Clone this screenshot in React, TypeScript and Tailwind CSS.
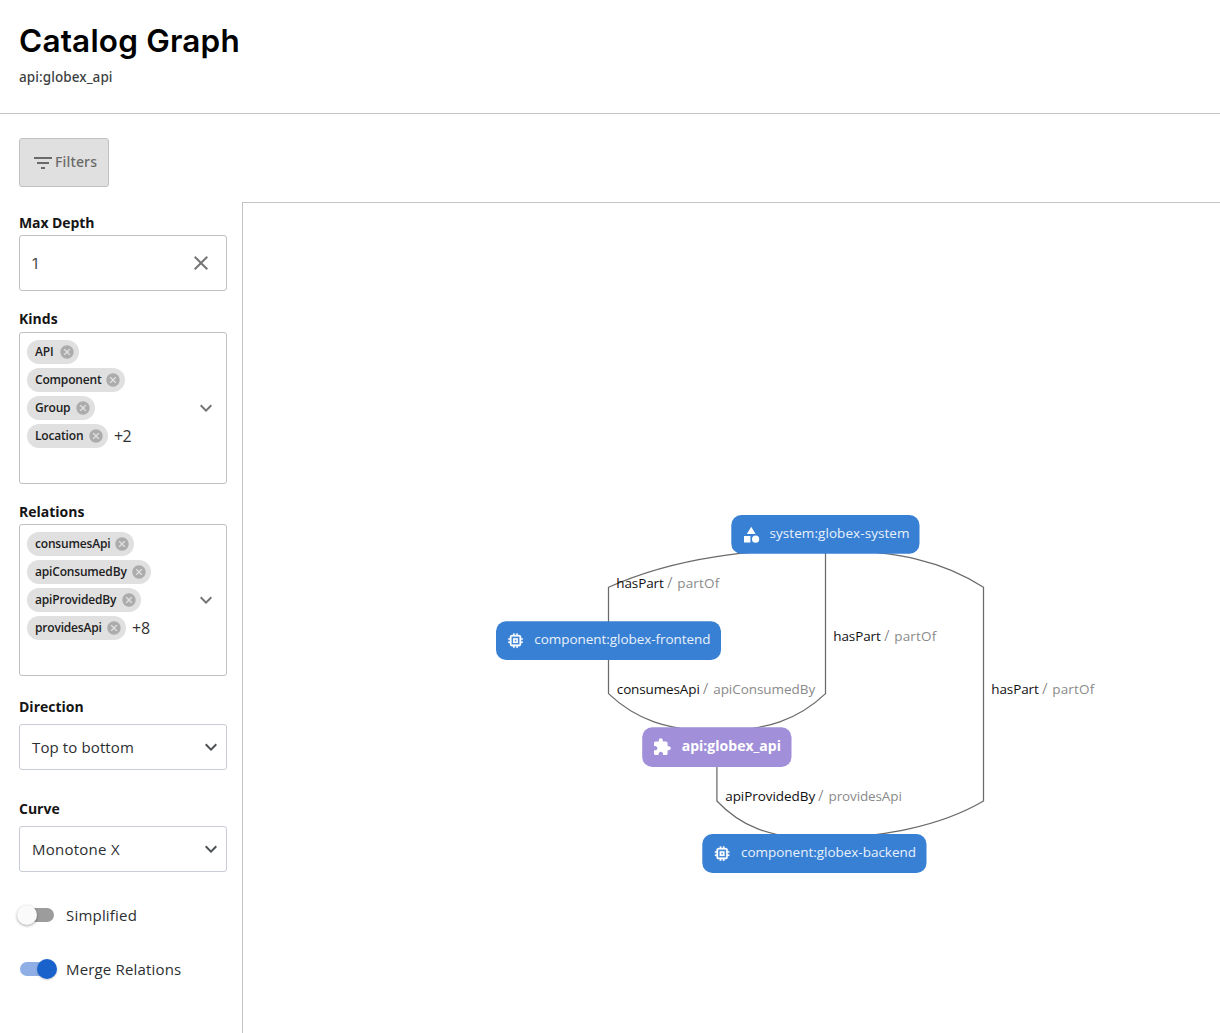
import React from "react";

const ICONS = {
  filter: "M10 18h4v-2h-4v2zM3 6v2h18V6H3zm3 7h12v-2H6v2z",
  close:
    "M19 6.41L17.59 5 12 10.59 6.41 5 5 6.41 10.59 12 5 17.59 6.41 19 12 13.41 17.59 19 19 17.59 13.41 12z",
  cancel:
    "M12 2C6.47 2 2 6.47 2 12s4.47 10 10 10 10-4.47 10-10S17.53 2 12 2zm5 13.59L15.59 17 12 13.41 8.41 17 7 15.59 10.59 12 7 8.41 8.41 7 12 10.59 15.59 7 17 8.41 13.41 12 17 15.59z",
  expand: "M16.59 8.59L12 13.17 7.41 8.59 6 10l6 6 6-6z",
  memory:
    "M15 9H9v6h6V9zm-2 4h-2v-2h2v2zm8-2V9h-2V7c0-1.1-.9-2-2-2h-2V3h-2v2h-2V3H9v2H7c-1.1 0-2 .9-2 2v2H3v2h2v2H3v2h2v2c0 1.1.9 2 2 2h2v2h2v-2h2v2h2v-2h2c1.1 0 2-.9 2-2v-2h2v-2h-2v-2h2zm-4 6H7V7h10v10z",
  category: "M12 2l-5.5 9h11zM17.5 13a4.5 4.5 0 1 0 0 9a4.5 4.5 0 1 0 0-9zM3 13.5h8v8H3z",
  extension:
    "M20.5 11H19V7c0-1.1-.9-2-2-2h-4V3.5C13 2.12 11.88 1 10.5 1S8 2.12 8 3.5V5H4c-1.1 0-1.99.9-1.99 2v3.8H3.5c1.49 0 2.7 1.21 2.7 2.7s-1.21 2.7-2.7 2.7H2V20c0 1.1.9 2 2 2h3.8v-1.5c0-1.49 1.21-2.7 2.7-2.7 1.49 0 2.7 1.21 2.7 2.7V22H17c1.1 0 2-.9 2-2v-4h1.5c1.38 0 2.5-1.12 2.5-2.5S21.88 11 20.5 11z",
};

function Icon({ name, className }: { name: keyof typeof ICONS; className: string }) {
  return (
    <svg viewBox="0 0 24 24" fill="currentColor" className={`shrink-0 ${className}`}>
      <path d={ICONS[name]} />
    </svg>
  );
}

function Label({ children, className = "" }: { children: React.ReactNode; className?: string }) {
  return <div className={`h-5 text-[14px] leading-5 font-bold text-[#151515] ${className}`}>{children}</div>;
}

interface ChipData {
  label: string;
  width: string;
}

function ChipSelect({ chips, more, moreClass }: { chips: ChipData[]; more: string; moreClass: string }) {
  return (
    <div className="flex h-[152px] items-center justify-between rounded-[3px] border border-[#c1c1c1] pr-2 pl-[7px]">
      <div className="flex h-full flex-col gap-1 pt-[7px]">
        {chips.map((c, i) => (
          <div key={c.label} className="flex items-center">
            <div
              className={`flex h-6 items-center justify-between rounded-full bg-[#e0e0e0] pr-1 pl-2 ${c.width}`}
            >
              <span className="text-[12px] leading-6 font-semibold tracking-[-0.18px] whitespace-nowrap text-[#212121]">
                {c.label}
              </span>
              <Icon name="cancel" className="size-4 text-[#acacac]" />
            </div>
            {i === chips.length - 1 && (
              <span className={`text-[16px] leading-6 text-[#333] ${moreClass}`}>{more}</span>
            )}
          </div>
        ))}
      </div>
      <Icon name="expand" className="size-6 text-[#757575]" />
    </div>
  );
}

function Select({ value, className }: { value: string; className: string }) {
  return (
    <div className="flex h-[46px] items-center justify-between rounded-[3px] border border-[#c7cbd4] pr-[3px] pl-3">
      <span className={`pb-px text-[15px] leading-[22px] text-[#2c2f32] ${className}`}>{value}</span>
      <Icon name="expand" className="size-6 text-[#4f5255]" />
    </div>
  );
}

interface NodeProps {
  x: number;
  y: number;
  w: number;
  h: number;
  fill: string;
  icon: keyof typeof ICONS;
  iconX: number;
  iconY: number;
  label: string;
  textX: number;
  textW: number;
  textY: number;
  bold?: boolean;
}

const NODES: NodeProps[] = [
  { x: 731.3, y: 515, w: 188.2, h: 38.8, fill: "#3880d4", icon: "category", iconX: 741.6, iconY: 525.2, label: "system:globex-system", textX: 769.5, textW: 140, textY: 538.3 },
  { x: 496, y: 621.2, w: 225, h: 38.8, fill: "#3880d4", icon: "memory", iconX: 505.9, iconY: 631, label: "component:globex-frontend", textX: 534.3, textW: 176.3, textY: 644.3 },
  { x: 642.2, y: 727.2, w: 149.3, h: 39.8, fill: "#a18fd9", icon: "extension", iconX: 652.4, iconY: 737.4, label: "api:globex_api", textX: 681.7, textW: 99.3, textY: 751, bold: true },
  { x: 702.3, y: 834, w: 224.2, h: 38.9, fill: "#3880d4", icon: "memory", iconX: 712.5, iconY: 844, label: "component:globex-backend", textX: 741, textW: 175, textY: 857.3 },
];

const EDGES = [
  "M825.5 547 C753 551 680 555 608.5 587.3 V693.6 C644.5 728 680.5 728 716.5 734.5",
  "M825.5 540 V693.6 C789.5 728 753 728 716.5 734.5",
  "M825.5 547 C878 553 930.8 553 983.5 587.3 V801 C930.8 832 868 836 815 842",
  "M716.9 750 V801 C749 835 782 835 815 842",
];

const EDGE_LABELS = [
  { x: 616.3, y: 588, a: "hasPart", aw: 47.5, s: 667.3, b: "partOf", bx: 677.2, bw: 42 },
  { x: 833.3, y: 641, a: "hasPart", aw: 47.5, s: 884.3, b: "partOf", bx: 894.2, bw: 42 },
  { x: 991.3, y: 694, a: "hasPart", aw: 47.5, s: 1042.3, b: "partOf", bx: 1052.2, bw: 42 },
  { x: 616.8, y: 694, a: "consumesApi", aw: 83, s: 703, b: "apiConsumedBy", bx: 713.2, bw: 102 },
  { x: 725.2, y: 801, a: "apiProvidedBy", aw: 90, s: 818.3, b: "providesApi", bx: 828.5, bw: 73.3 },
];

function GraphNode(n: NodeProps) {
  return (
    <g>
      <rect x={n.x} y={n.y} width={n.w} height={n.h} rx={10} fill={n.fill} />
      <svg x={n.iconX} y={n.iconY} width={19.2} height={19.2} viewBox="0 0 24 24" fill="#fff">
        <path d={ICONS[n.icon]} stroke="#fff" strokeWidth={n.icon === "memory" ? 0.25 : 0} />
      </svg>
      <text
        x={n.textX}
        y={n.textY}
        textLength={n.textW}
        fill={n.bold ? "#fff" : "#e9f1fb"}
        className={n.bold ? "text-[14px] font-bold" : "text-[13.5px]"}
      >
        {n.label}
      </text>
    </g>
  );
}

function Graph() {
  return (
    <svg viewBox="243 203 977 830" className="block h-[830px] w-[977px]">
      <g fill="none" stroke="#6a6a6a" strokeWidth={1.25}>
        {EDGES.map((d) => (
          <path key={d} d={d} />
        ))}
      </g>
      {EDGE_LABELS.map((l) => (
        <g key={`${l.x}-${l.y}`} className="text-[13.5px]">
          <text x={l.x} y={l.y} textLength={l.aw} fill="#111">
            {l.a}
          </text>
          <text x={l.s} y={l.y} fill="#555" className="text-[15px] font-light">
            /
          </text>
          <text x={l.bx} y={l.y} textLength={l.bw} fill="#8a8a8a">
            {l.b}
          </text>
        </g>
      ))}
      {NODES.map((n) => (
        <GraphNode key={n.label} {...n} />
      ))}
    </svg>
  );
}

export default function App() {
  return (
    <div className="flex h-[1033px] w-[1220px] flex-col overflow-hidden bg-white font-['Open_Sans',sans-serif]">
      <header className="h-[114px] shrink-0 border-b border-[#c4c4c4] pt-[21px] pl-[19px]">
        <h1 className="h-10 font-[Inter,sans-serif] text-[31.5px] leading-10 font-semibold tracking-[0.18px] whitespace-nowrap text-black">
          Catalog Graph
        </h1>
        <p className="mt-1.5 h-5 font-['Noto_Sans',sans-serif] text-[13.5px] leading-5 font-medium tracking-[0.08px] text-[#3c3f42]">
          api:globex_api
        </p>
      </header>
      <div className="h-[88px] shrink-0 pt-6 pl-[19px]">
        <button className="flex h-[49px] w-[90px] items-center rounded-[3px] border border-[#c1c1c1] bg-[#e0e0e0] pl-[11px] text-[#6a6a6a]">
          <Icon name="filter" className="size-6" />
          <span className="pb-0.5 font-['Noto_Sans',sans-serif] text-[14px] font-medium tracking-[0.15px]">
            Filters
          </span>
        </button>
      </div>
      <main className="flex min-h-0 flex-1">
        <aside className="w-[242px] shrink-0 pt-[11px] pr-[15px] pl-[19px]">
          <Label className="tracking-[-0.1px]">Max Depth</Label>
          <div className="mt-0.5 flex h-14 items-center justify-between rounded-[3px] border border-[#c1c1c1] pr-[13px] pl-3">
            <span className="pt-0.5 font-[Inter,sans-serif] text-[15px] text-[#4c4c4c]">1</span>
            <Icon name="close" className="size-6 text-[#757575]" />
          </div>
          <Label className="mt-[18px] mb-[3px]">Kinds</Label>
          <ChipSelect
            chips={[
              { label: "API", width: "w-[52px]" },
              { label: "Component", width: "w-[98px]" },
              { label: "Group", width: "w-[68px]" },
              { label: "Location", width: "w-[81px]" },
            ]}
            more="+2"
            moreClass="ml-1.5 tracking-[-0.6px]"
          />
          <Label className="mt-[18px] mb-0.5">Relations</Label>
          <ChipSelect
            chips={[
              { label: "consumesApi", width: "w-[107px]" },
              { label: "apiConsumedBy", width: "w-[124px]" },
              { label: "apiProvidedBy", width: "w-[114px]" },
              { label: "providesApi", width: "w-[99px]" },
            ]}
            more="+8"
            moreClass="ml-1.5 tracking-[-0.1px]"
          />
          <Label className="mt-[21px] mb-[7px]">Direction</Label>
          <Select value="Top to bottom" className="tracking-[0.12px]" />
          <Label className="mt-[29px] mb-[7px]">Curve</Label>
          <Select value="Monotone X" className="tracking-[0.25px]" />
          <div className="mt-[31px] flex h-6 items-center">
            <div className="relative h-3.5 w-[35px] rounded-full bg-[#9c9c9c]">
              <div className="absolute -top-[3px] -left-0.5 size-5 rounded-full bg-[#fafafa] shadow-[0_1px_3px_rgba(0,0,0,0.35)]" />
            </div>
            <span className="ml-3 pb-px text-[15px] leading-[22px] tracking-[0.2px] text-[#2c2f32]">Simplified</span>
          </div>
          <div className="mt-[30px] flex h-6 items-center">
            <div className="relative ml-px h-3.5 w-[34px] rounded-full bg-[#8eaee5]">
              <div className="absolute -top-[3px] left-[17px] size-5 rounded-full bg-[#1a62cb] shadow-[0_1px_2px_rgba(0,0,0,0.2)]" />
            </div>
            <span className="ml-3 pb-px text-[15px] leading-[22px] tracking-[0.17px] text-[#2c2f32]">
              Merge Relations
            </span>
          </div>
        </aside>
        <section className="w-[978px] shrink-0 border-t border-l border-[#c4c4c4]">
          <Graph />
        </section>
      </main>
    </div>
  );
}
